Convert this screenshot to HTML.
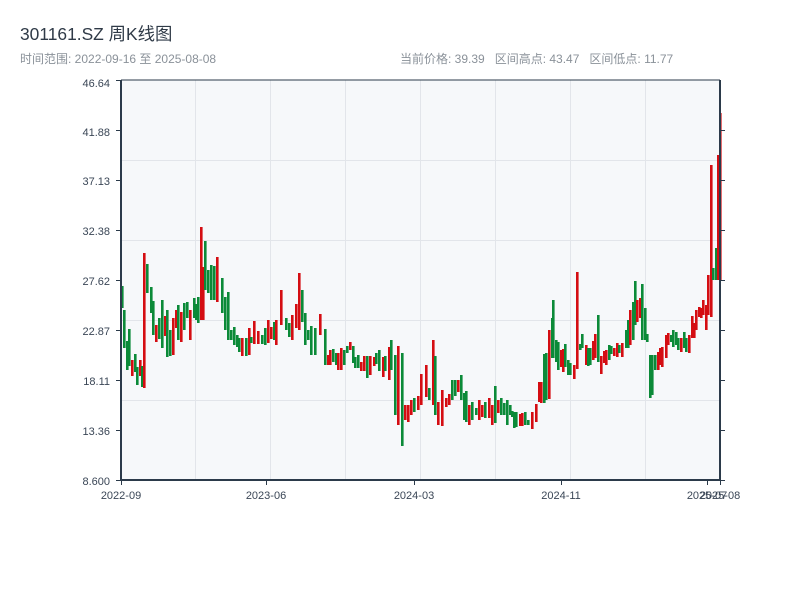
<!DOCTYPE html>
<html><head><meta charset="utf-8"><style>
html,body{margin:0;padding:0;background:#fff;width:800px;height:600px;overflow:hidden}
svg{display:block}
text{font-family:"Liberation Sans","Noto Sans CJK SC",sans-serif}
</style></head><body>
<svg id="s" width="800" height="600" xmlns="http://www.w3.org/2000/svg">
<text x="20" y="40" font-size="17.4" fill="#2f3a47">301161.SZ 周K线图</text>
<text x="20" y="63" font-size="12" fill="#8a9199">时间范围: 2022-09-16 至 2025-08-08</text>
<text x="400" y="63" font-size="12" fill="#8a9199" xml:space="preserve">当前价格: 39.39   区间高点: 43.47   区间低点: 11.77</text>
<rect x="121" y="80" width="599" height="400" fill="#f6f8fa"/>
<g stroke="#e2e5ea" stroke-width="1">
<line x1="121" x2="720" y1="160.5" y2="160.5"/><line x1="121" x2="720" y1="240.5" y2="240.5"/>
<line x1="121" x2="720" y1="320.5" y2="320.5"/><line x1="121" x2="720" y1="400.5" y2="400.5"/>
<line x1="195.5" x2="195.5" y1="80" y2="480"/><line x1="270.5" x2="270.5" y1="80" y2="480"/>
<line x1="345.5" x2="345.5" y1="80" y2="480"/><line x1="420.5" x2="420.5" y1="80" y2="480"/>
<line x1="495.5" x2="495.5" y1="80" y2="480"/><line x1="570.5" x2="570.5" y1="80" y2="480"/>
<line x1="645.5" x2="645.5" y1="80" y2="480"/>
</g>
<g id="c"></g>
<g stroke="#2b3a4a" stroke-width="2" fill="none">
<line x1="121" x2="121" y1="80" y2="481"/>
<line x1="120" x2="721" y1="480" y2="480"/>
<line x1="720" x2="720" y1="80" y2="481"/>
<line x1="121" x2="720" y1="80" y2="80" stroke-width="1"/>
</g>
<g stroke="#2b3a4a" stroke-width="1">
<line x1="116" x2="121" y1="80.5" y2="80.5"/><line x1="116" x2="121" y1="130.5" y2="130.5"/>
<line x1="116" x2="121" y1="180.5" y2="180.5"/><line x1="116" x2="121" y1="230.5" y2="230.5"/>
<line x1="116" x2="121" y1="280.5" y2="280.5"/><line x1="116" x2="121" y1="330.5" y2="330.5"/>
<line x1="116" x2="121" y1="380.5" y2="380.5"/><line x1="116" x2="121" y1="430.5" y2="430.5"/>
<line x1="116" x2="121" y1="480.5" y2="480.5"/>
<line x1="720" x2="725" y1="130.5" y2="130.5"/><line x1="720" x2="725" y1="180.5" y2="180.5"/>
<line x1="720" x2="725" y1="230.5" y2="230.5"/><line x1="720" x2="725" y1="280.5" y2="280.5"/>
<line x1="720" x2="725" y1="330.5" y2="330.5"/><line x1="720" x2="725" y1="380.5" y2="380.5"/>
<line x1="720" x2="725" y1="430.5" y2="430.5"/><line x1="720" x2="725" y1="480.5" y2="480.5"/>
<line x1="121.5" x2="121.5" y1="480" y2="485"/><line x1="266.5" x2="266.5" y1="480" y2="485"/>
<line x1="414.5" x2="414.5" y1="480" y2="485"/><line x1="561.5" x2="561.5" y1="480" y2="485"/>
<line x1="707.5" x2="707.5" y1="480" y2="485"/><line x1="720.5" x2="720.5" y1="480" y2="485"/>
</g>
<g font-size="11" fill="#3a4656" text-anchor="end">
<text x="110" y="87">46.64</text><text x="110" y="136">41.88</text><text x="110" y="185">37.13</text>
<text x="110" y="235">32.38</text><text x="110" y="285">27.62</text><text x="110" y="335">22.87</text>
<text x="110" y="385">18.11</text><text x="110" y="435">13.36</text><text x="110" y="485">8.600</text>
</g>
<g font-size="11" fill="#3a4656" text-anchor="middle">
<text x="121" y="499">2022-09</text><text x="266" y="499">2023-06</text><text x="414" y="499">2024-03</text>
<text x="561" y="499">2024-11</text><text x="707" y="499">2025-07</text><text x="720" y="499">2025-08</text>
</g>
</svg>
<script>
var d=[[119,286,308,'g'],[124,310,348,'g'],[127,341,370,'g'],[129,329,366,'g'],[132,360,376,'r'],[135,354,372,'g'],[137,367,385,'g'],[140,360,376,'r'],[142,366,387,'g'],[144,253,388,'r'],[147,264,293,'g'],[151,287,313,'g'],[153,301,335,'g'],[156,325,342,'r'],[159,318,339,'g'],[162,300,348,'g'],[165,316,336,'r'],[167,310,357,'g'],[170,330,356,'g'],[173,318,355,'r'],[176,310,328,'r'],[178,305,340,'g'],[181,312,342,'r'],[184,303,330,'g'],[187,302,318,'g'],[190,310,340,'r'],[194,298,318,'g'],[196,304,320,'g'],[198,297,323,'g'],[201,227,320,'r'],[203,267,320,'r'],[205,241,290,'g'],[208,270,293,'g'],[211,265,300,'g'],[214,266,300,'g'],[217,257,302,'r'],[222,278,313,'g'],[225,297,330,'g'],[228,292,340,'g'],[231,330,340,'g'],[234,327,345,'g'],[237,335,347,'g'],[239,338,352,'g'],[242,338,356,'r'],[246,338,356,'g'],[249,328,355,'r'],[251,337,343,'g'],[254,321,344,'r'],[258,331,344,'r'],[262,335,344,'g'],[265,328,345,'g'],[268,320,343,'r'],[271,327,339,'r'],[274,322,340,'g'],[276,320,345,'r'],[281,290,325,'r'],[286,318,330,'g'],[289,323,337,'g'],[292,315,340,'r'],[296,304,328,'r'],[299,273,330,'r'],[302,290,322,'g'],[305,313,345,'g'],[308,330,340,'g'],[311,326,355,'g'],[315,328,355,'g'],[320,314,335,'r'],[325,329,365,'g'],[328,355,365,'r'],[330,350,365,'r'],[333,349,362,'g'],[336,353,365,'g'],[338,353,370,'r'],[341,348,370,'r'],[344,350,365,'g'],[347,346,353,'g'],[350,342,350,'r'],[353,346,363,'g'],[355,357,368,'g'],[358,355,368,'g'],[361,362,371,'r'],[364,356,371,'r'],[367,356,378,'g'],[370,356,375,'r'],[374,357,366,'r'],[376,353,364,'g'],[379,350,371,'g'],[383,357,377,'r'],[385,356,371,'g'],[389,347,380,'r'],[391,340,370,'g'],[395,355,415,'g'],[398,346,425,'r'],[402,353,446,'g'],[405,405,420,'r'],[408,405,422,'r'],[411,400,415,'r'],[414,398,412,'g'],[418,396,410,'r'],[421,374,405,'r'],[426,365,397,'r'],[429,388,400,'g'],[433,340,405,'r'],[435,356,415,'g'],[438,402,425,'r'],[442,390,426,'r'],[446,398,407,'r'],[449,394,405,'r'],[452,380,400,'g'],[455,380,396,'g'],[458,380,392,'r'],[461,375,400,'g'],[464,393,420,'g'],[466,391,422,'g'],[469,405,425,'r'],[472,402,420,'g'],[476,408,415,'g'],[479,400,420,'r'],[482,405,417,'r'],[485,402,418,'g'],[489,398,418,'r'],[492,405,425,'r'],[495,386,423,'g'],[498,400,413,'r'],[501,398,415,'g'],[504,403,415,'g'],[507,400,425,'g'],[510,405,415,'g'],[512,411,417,'g'],[514,412,428,'g'],[516,412,427,'g'],[520,414,426,'r'],[522,413,426,'r'],[525,412,425,'g'],[528,420,425,'g'],[532,412,429,'r'],[536,404,422,'r'],[539,382,402,'r'],[541,382,403,'r'],[544,354,403,'g'],[546,353,400,'g'],[549,330,399,'r'],[552,318,358,'g'],[553,300,358,'g'],[556,340,362,'g'],[558,342,370,'g'],[561,350,367,'r'],[563,349,372,'r'],[565,344,367,'g'],[568,360,375,'g'],[570,363,375,'g'],[574,365,379,'r'],[577,272,369,'r'],[580,344,350,'g'],[582,334,348,'g'],[586,345,365,'r'],[588,348,366,'g'],[590,348,365,'g'],[593,341,360,'r'],[595,334,358,'r'],[598,315,362,'g'],[601,356,374,'r'],[604,351,363,'r'],[606,350,365,'r'],[609,345,360,'g'],[611,346,354,'g'],[614,348,356,'r'],[617,343,357,'r'],[619,345,353,'g'],[622,343,357,'r'],[626,330,348,'g'],[628,320,348,'g'],[630,310,345,'r'],[633,302,340,'g'],[635,281,325,'g'],[637,300,322,'r'],[640,298,318,'r'],[642,284,340,'g'],[645,308,340,'g'],[647,334,342,'g'],[650,355,398,'g'],[652,355,395,'g'],[655,355,370,'g'],[658,352,370,'r'],[660,348,365,'r'],[662,347,367,'r'],[666,335,358,'r'],[668,333,345,'r'],[671,335,342,'g'],[673,330,347,'g'],[676,332,345,'g'],[678,338,350,'g'],[681,338,352,'r'],[684,332,348,'g'],[686,338,352,'g'],[689,335,353,'r'],[692,316,338,'r'],[694,323,338,'r'],[696,310,330,'r'],[699,307,317,'r'],[701,308,318,'r'],[703,300,315,'r'],[706,305,330,'r'],[708,275,315,'r'],[711,165,317,'r'],[713,268,280,'g'],[716,248,280,'g'],[718,155,280,'r'],[720,113,280,'r']];
var g=document.getElementById('c'),s='';
d.forEach(function(c){var x=Math.max(c[0],122);var col=c[3]=='r'?'#d40d12':'#0b8a38';
s+='<rect x="'+(x-1)+'" y="'+c[1]+'" width="2.6" height="'+(c[2]-c[1])+'" fill="'+col+'"/>';});
g.innerHTML=s;
</script>
</body></html>
